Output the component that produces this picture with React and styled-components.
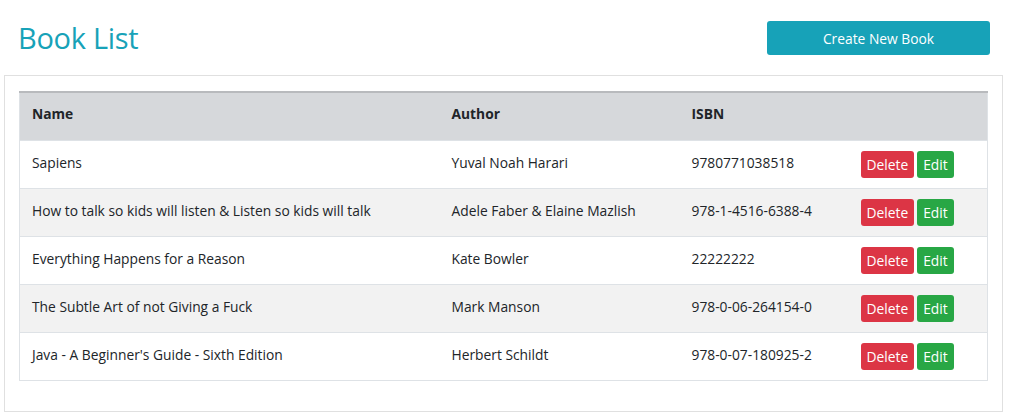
import styled, { createGlobalStyle } from 'styled-components';

const GlobalStyle = createGlobalStyle`
  body {
    margin: 0;
    background: #fff;
    font-family: "Open Sans", "Noto Sans", sans-serif;
    color: #212529;
  }
  *, *::before, *::after {
    box-sizing: border-box;
  }
`;

const Page = styled.div`
  padding: 0 19px 0 4px;
`;

const TopBar = styled.header`
  display: flex;
  justify-content: space-between;
  align-items: center;
  height: 75px;
  padding-left: 14px;
`;

const Title = styled.h1`
  margin: 0;
  font-size: 29px;
  font-weight: 500;
  color: #17a2b8;
  letter-spacing: -0.3px;
`;

const Button = styled.button`
  border: none;
  border-radius: 3px;
  color: #fff;
  font-family: inherit;
  cursor: pointer;
  background: ${({ $variant }) =>
    $variant === 'danger' ? '#dc3545' : $variant === 'success' ? '#28a745' : '#17a2b8'};
`;

const CreateButton = styled(Button)`
  width: 223px;
  height: 34px;
  font-size: 13.8px;
  margin-top: 1px;
`;

const Card = styled.section`
  border: 1px solid #e0e0e0;
  margin-right: -13px;
  padding: 15px 15px 30px 14px;
`;

const Table = styled.table`
  width: 968px;
  border-collapse: collapse;
  border: 1px solid #dee2e6;
  font-size: 13.8px;
  line-height: 21px;
  table-layout: fixed;
`;

const HeadCell = styled.th`
  text-align: left;
  font-weight: 700;
  background: #d6d8db;
  border-top: 2px solid #b8babd;
  padding: 10px 12px 16px;
  width: ${({ $w }) => $w}px;
`;

const Row = styled.tr`
  background: ${({ $striped }) => ($striped ? '#f2f2f2' : '#fff')};
  border-top: 1px solid #dee2e6;
`;

const Cell = styled.td`
  height: 47px;
  padding: ${({ $actions }) => ($actions ? '10px 12px 10px 11px' : '11px 12px 15px')};
  vertical-align: top;
`;

const Actions = styled.div`
  display: flex;
  gap: 3px;
`;

const SmallButton = styled(Button)`
  height: 27px;
  padding: 0 6px;
  font-size: 13.8px;
`;

const books = [
  ['Sapiens', 'Yuval Noah Harari', '9780771038518'],
  ['How to talk so kids will listen & Listen so kids will talk', 'Adele Faber & Elaine Mazlish', '978-1-4516-6388-4'],
  ['Everything Happens for a Reason', 'Kate Bowler', '22222222'],
  ['The Subtle Art of not Giving a Fuck', 'Mark Manson', '978-0-06-264154-0'],
  ["Java - A Beginner's Guide - Sixth Edition", 'Herbert Schildt', '978-0-07-180925-2']
];

export default function App() {
  return (
    <Page>
      <GlobalStyle />
      <TopBar>
        <Title>Book List</Title>
        <CreateButton>Create New Book</CreateButton>
      </TopBar>
      <Card>
        <Table>
          <thead>
            <tr>
              <HeadCell $w={420}>Name</HeadCell>
              <HeadCell $w={240}>Author</HeadCell>
              <HeadCell $w={170}>ISBN</HeadCell>
              <HeadCell $w={138}></HeadCell>
            </tr>
          </thead>
          <tbody>
            {books.map(([name, author, isbn], i) => (
              <Row key={isbn} $striped={i % 2 === 1}>
                <Cell>{name}</Cell>
                <Cell>{author}</Cell>
                <Cell>{isbn}</Cell>
                <Cell $actions>
                  <Actions>
                    <SmallButton $variant='danger'>Delete</SmallButton>
                    <SmallButton $variant='success'>Edit</SmallButton>
                  </Actions>
                </Cell>
              </Row>
            ))}
          </tbody>
        </Table>
      </Card>
    </Page>
  );
}
